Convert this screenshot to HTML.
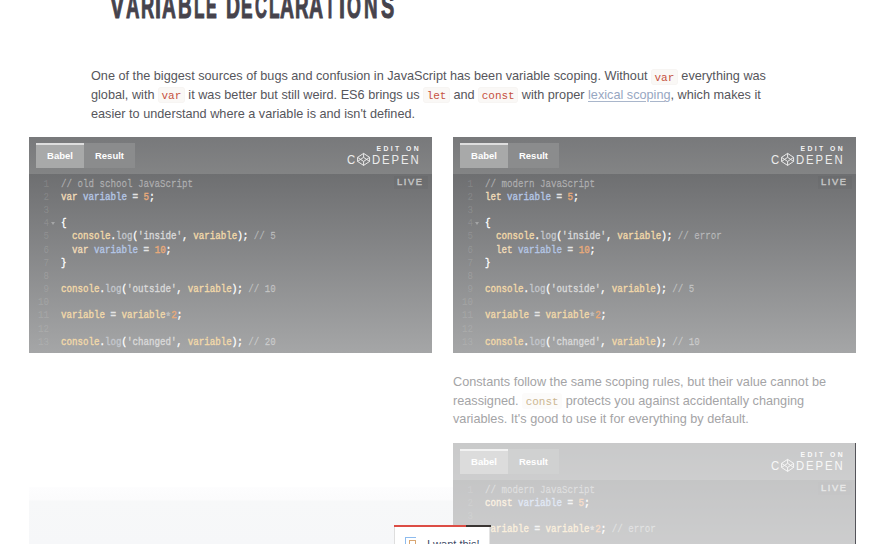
<!DOCTYPE html>
<html><head><meta charset="utf-8">
<style>
*{box-sizing:border-box}
html,body{margin:0;padding:0}
body{width:890px;height:544px;overflow:hidden;background:#fff;position:relative;font-family:"Liberation Sans",sans-serif}
.h1{position:absolute;left:0;top:0;width:890px;height:30px}
.h1 span{position:absolute;top:-12px;font:bold 35px/35px "Liberation Sans",sans-serif;color:#46434c;-webkit-text-stroke:1.05px #46434c;transform-origin:0 0;white-space:nowrap}
.p{position:absolute;margin:0;font-size:12.7px;line-height:18.7px;white-space:nowrap}
.p1{left:91px;top:67.3px;color:#56565c}
.p2{left:453px;top:372.8px;color:#a4a4a6}
.c{font-family:"Liberation Mono",monospace;font-size:11px;line-height:10px;padding:2.7px 3.5px 1.3px;border-radius:3px}
.p1 .c{color:#c6513e;background:#faf8f6;box-shadow:inset 0 0 0 1px rgba(120,100,80,0.02)}
.p2 .c{color:#cdb892;background:#fcfbfa}
.lnk{color:#97a7c2;text-decoration:underline;text-decoration-color:#a9b6cb;text-underline-offset:2px}
.pen{position:absolute;width:403px;overflow:hidden}
.hdr{position:absolute;left:0;top:0;width:100%;height:37px}
.tab{position:absolute;top:6px;height:25px;font:bold 9.5px/25px "Liberation Sans",sans-serif;color:#fff;text-align:center}
.t1{left:7px;width:48px;box-shadow:inset 0 2px 0 rgba(255,255,255,0.62)}
.t2{left:55px;width:51px}
.eo{position:absolute;left:347.6px;top:7.6px;font:bold 6.8px/7px "Liberation Sans",sans-serif;letter-spacing:2.4px;color:#f2f2f2;white-space:nowrap}
.cpc,.cpd{position:absolute;top:16.5px;font:12.6px/13px "Liberation Sans",sans-serif;color:#ececec;white-space:nowrap;transform-origin:0 0;transform:scaleX(0.9)}
.cpc{left:318px}
.cpd{left:343.4px;letter-spacing:2.1px}
.logo{position:absolute;left:327.8px;top:16.1px;width:13.2px;height:12.8px;overflow:visible}
.code{position:absolute;left:0;top:37px;width:100%;bottom:0;font-family:"Liberation Mono",monospace;font-size:10px;line-height:13.16px;padding-top:3.8px;-webkit-text-stroke:0.35px}
.ln{display:block;white-space:pre;height:13.16px;position:relative}
.ln i{font-style:normal;position:absolute;left:0;width:20px;text-align:right;color:rgba(255,255,255,0.09);transform:scaleX(0.917);transform-origin:100% 0}
.ln b{font-weight:normal;position:absolute;left:32.3px;transform:scaleX(0.917);transform-origin:0 0}
.fold{position:absolute;left:22.2px;top:5.2px;width:0;height:0;border-left:2.7px solid transparent;border-right:2.7px solid transparent;border-top:3.2px solid rgba(255,255,255,0.3)}
.live{position:absolute;left:365px;top:1.5px;width:34px;height:13px;padding-left:3px;font:9.3px/13px "Liberation Sans",sans-serif;-webkit-text-stroke:0.45px #c4c4c4;letter-spacing:1.6px;color:#c4c4c4;background:rgba(0,0,0,0.03);white-space:nowrap}
.k{color:#f1dcb8}.v{color:#b4c6e6}.o{color:#e4e4e4;-webkit-text-stroke:0.5px}.n{color:#e8aa7a}.w{color:#fff}.cm{color:rgba(255,255,255,0.32)}.con{color:#f2d9a9}.fn{color:#c3c6cc}.s{color:#d9d9d9}.va{color:#f2d9a9}
</style></head><body>

<div class="h1"><span style="left:110.40px;transform:scaleX(0.617)">V</span><span style="left:125.87px;transform:scaleX(0.533)">A</span><span style="left:140.56px;transform:scaleX(0.522)">R</span><span style="left:154.67px;transform:scaleX(0.617)">I</span><span style="left:161.65px;transform:scaleX(0.550)">A</span><span style="left:177.62px;transform:scaleX(0.541)">B</span><span style="left:193.82px;transform:scaleX(0.489)">L</span><span style="left:206.48px;transform:scaleX(0.460)">E</span><span style="left:225.79px;transform:scaleX(0.555)">D</span><span style="left:241.11px;transform:scaleX(0.495)">E</span><span style="left:254.83px;transform:scaleX(0.471)">C</span><span style="left:268.91px;transform:scaleX(0.495)">L</span><span style="left:280.05px;transform:scaleX(0.554)">A</span><span style="left:294.62px;transform:scaleX(0.539)">R</span><span style="left:309.34px;transform:scaleX(0.558)">A</span><span style="left:325.10px;transform:scaleX(0.467)">T</span><span style="left:338.57px;transform:scaleX(0.617)">I</span><span style="left:347.39px;transform:scaleX(0.512)">O</span><span style="left:364.02px;transform:scaleX(0.538)">N</span><span style="left:380.63px;transform:scaleX(0.567)">S</span></div>

<p class="p p1">One of the biggest sources of bugs and confusion in JavaScript has been variable scoping. Without <span class="c">var</span> everything was<br>global, with <span class="c">var</span> it was better but still weird. ES6 brings us <span class="c">let</span> and <span class="c">const</span> with proper <span class="lnk">lexical scoping</span>, which makes it<br>easier to understand where a variable is and isn't defined.</p>

<!-- PEN 1 -->
<div class="pen" style="left:29px;top:137px;height:216px">
  <div class="hdr" style="background:linear-gradient(#78797b,#838485)">
    <div class="tab t1" style="background:#a8a9a9">Babel</div>
    <div class="tab t2" style="background:#8b8c8d">Result</div>
    <div class="eo">EDIT ON</div>
    <div class="cpc">C</div><svg class="logo" viewBox="0 0 100 100"><path d="M50 3L97 34V66L50 97L3 66V34Z M50 3V34 M50 97V66 M3 34L50 66L97 34 M3 66L50 34L97 66" fill="none" stroke="#ededed" stroke-width="7.5" stroke-linejoin="round"/></svg><div class="cpd">DEPEN</div>
  </div>
  <div class="code" style="background:linear-gradient(#6e6f71,#a5a6a7)">
    <div class="live">LIVE</div>
    <span class="ln"><i>1</i><b class="cm">// old school JavaScript</b></span>
    <span class="ln"><i>2</i><b><span class="k">var</span> <span class="v">variable</span> <span class="o">=</span> <span class="n">5</span><span class="w">;</span></b></span>
    <span class="ln"><i>3</i></span>
    <span class="ln"><i>4</i><em class="fold"></em><b class="w">{</b></span>
    <span class="ln"><i>5</i><b>  <span class="con">console</span><span class="w">.</span><span class="fn">log</span><span class="w">(</span><span class="s">'inside'</span><span class="w">,</span> <span class="va">variable</span><span class="w">);</span> <span class="cm">// 5</span></b></span>
    <span class="ln"><i>6</i><b>  <span class="k">var</span> <span class="v">variable</span> <span class="o">=</span> <span class="n">10</span><span class="w">;</span></b></span>
    <span class="ln"><i>7</i><b class="w">}</b></span>
    <span class="ln"><i>8</i></span>
    <span class="ln"><i>9</i><b><span class="con">console</span><span class="w">.</span><span class="fn">log</span><span class="w">(</span><span class="s">'outside'</span><span class="w">,</span> <span class="va">variable</span><span class="w">);</span> <span class="cm">// 10</span></b></span>
    <span class="ln"><i>10</i></span>
    <span class="ln"><i>11</i><b><span class="va">variable</span> <span class="o">=</span> <span class="va">variable</span><span class="o" style="color:#bdbdbd;position:relative;top:1.5px;-webkit-text-stroke:0.6px #bdbdbd">*</span><span class="n">2</span><span class="w">;</span></b></span>
    <span class="ln"><i>12</i></span>
    <span class="ln"><i>13</i><b><span class="con">console</span><span class="w">.</span><span class="fn">log</span><span class="w">(</span><span class="s">'changed'</span><span class="w">,</span> <span class="va">variable</span><span class="w">);</span> <span class="cm">// 20</span></b></span>
  </div>
</div>

<!-- PEN 2 -->
<div class="pen" style="left:453px;top:137px;height:216px">
  <div class="hdr" style="background:linear-gradient(#78797b,#838485)">
    <div class="tab t1" style="background:#a8a9a9">Babel</div>
    <div class="tab t2" style="background:#8b8c8d">Result</div>
    <div class="eo">EDIT ON</div>
    <div class="cpc">C</div><svg class="logo" viewBox="0 0 100 100"><path d="M50 3L97 34V66L50 97L3 66V34Z M50 3V34 M50 97V66 M3 34L50 66L97 34 M3 66L50 34L97 66" fill="none" stroke="#ededed" stroke-width="7.5" stroke-linejoin="round"/></svg><div class="cpd">DEPEN</div>
  </div>
  <div class="code" style="background:linear-gradient(#6e6f71,#a5a6a7)">
    <div class="live">LIVE</div>
    <span class="ln"><i>1</i><b class="cm">// modern JavaScript</b></span>
    <span class="ln"><i>2</i><b><span class="k">let</span> <span class="v">variable</span> <span class="o">=</span> <span class="n">5</span><span class="w">;</span></b></span>
    <span class="ln"><i>3</i></span>
    <span class="ln"><i>4</i><em class="fold"></em><b class="w">{</b></span>
    <span class="ln"><i>5</i><b>  <span class="con">console</span><span class="w">.</span><span class="fn">log</span><span class="w">(</span><span class="s">'inside'</span><span class="w">,</span> <span class="va">variable</span><span class="w">);</span> <span class="cm">// error</span></b></span>
    <span class="ln"><i>6</i><b>  <span class="k">let</span> <span class="v">variable</span> <span class="o">=</span> <span class="n">10</span><span class="w">;</span></b></span>
    <span class="ln"><i>7</i><b class="w">}</b></span>
    <span class="ln"><i>8</i></span>
    <span class="ln"><i>9</i><b><span class="con">console</span><span class="w">.</span><span class="fn">log</span><span class="w">(</span><span class="s">'outside'</span><span class="w">,</span> <span class="va">variable</span><span class="w">);</span> <span class="cm">// 5</span></b></span>
    <span class="ln"><i>10</i></span>
    <span class="ln"><i>11</i><b><span class="va">variable</span> <span class="o">=</span> <span class="va">variable</span><span class="o" style="color:#bdbdbd;position:relative;top:1.5px;-webkit-text-stroke:0.6px #bdbdbd">*</span><span class="n">2</span><span class="w">;</span></b></span>
    <span class="ln"><i>12</i></span>
    <span class="ln"><i>13</i><b><span class="con">console</span><span class="w">.</span><span class="fn">log</span><span class="w">(</span><span class="s">'changed'</span><span class="w">,</span> <span class="va">variable</span><span class="w">);</span> <span class="cm">// 10</span></b></span>
  </div>
</div>

<p class="p p2">Constants follow the same scoping rules, but their value cannot be<br>reassigned. <span class="c">const</span> protects you against accidentally changing<br>variables. It's good to use it for everything by default.</p>

<!-- PEN 3 -->
<div class="pen" style="left:453px;top:443px;height:101px">
  <div class="hdr" style="background:linear-gradient(#78797b,#838485)">
    <div class="tab t1" style="background:#a8a9a9">Babel</div>
    <div class="tab t2" style="background:#8b8c8d">Result</div>
    <div class="eo">EDIT ON</div>
    <div class="cpc">C</div><svg class="logo" viewBox="0 0 100 100"><path d="M50 3L97 34V66L50 97L3 66V34Z M50 3V34 M50 97V66 M3 34L50 66L97 34 M3 66L50 34L97 66" fill="none" stroke="#ededed" stroke-width="7.5" stroke-linejoin="round"/></svg><div class="cpd">DEPEN</div>
  </div>
  <div class="code" style="background:linear-gradient(#6e6f71,#a5a6a7);bottom:auto;height:178.8px">
    <div class="live">LIVE</div>
    <span class="ln"><i>1</i><b class="cm">// modern JavaScript</b></span>
    <span class="ln"><i>2</i><b><span class="k">const</span> <span class="v">variable</span> <span class="o">=</span> <span class="n">5</span><span class="w">;</span></b></span>
    <span class="ln"><i>3</i></span>
    <span class="ln"><i>4</i><b><span class="va">variable</span> <span class="o">=</span> <span class="va">variable</span><span class="o" style="color:#bdbdbd;position:relative;top:1.5px;-webkit-text-stroke:0.6px #bdbdbd">*</span><span class="n">2</span><span class="w">;</span> <span class="cm">// error</span></b></span>
  </div>
  <div style="position:absolute;left:0;top:0;right:0;bottom:0;background:rgba(255,255,255,0.6)"></div>
  <div style="position:absolute;right:0;top:0;width:1px;bottom:0;background:#54545a"></div>
</div>

<!-- faint lower-left block -->
<div style="position:absolute;left:29px;top:487px;width:424px;height:57px;background:linear-gradient(#fdfdfe 0px,#fbfbfc 13px,#f7f8f9 14px,#f6f7f9 57px)"></div>

<!-- popup -->
<div style="position:absolute;left:394px;top:525px;width:96px;height:30px;background:#fff;border-left:1px solid #dedede;border-right:1px solid #e4e4e4">
  <div style="position:absolute;left:-1px;top:0;width:71.5px;height:2px;background:#dc4d45"></div>
  <div style="position:absolute;left:70.5px;top:0;width:25.5px;height:2px;background:#3b3634"></div>
  <div style="position:absolute;left:10px;top:12.3px;width:11px;height:11px;border-top:1.5px solid #8dbbee;border-left:1.5px solid #8dbbee"></div>
  <div style="position:absolute;left:13.6px;top:15.2px;width:7.5px;height:8px;border:1.5px solid #d9a773"></div>
  <div style="position:absolute;left:32px;top:11.5px;font:11px/14px 'Liberation Sans',sans-serif;color:#3d4a66;white-space:nowrap">I want this!</div>
</div>
</div>

</body></html>
